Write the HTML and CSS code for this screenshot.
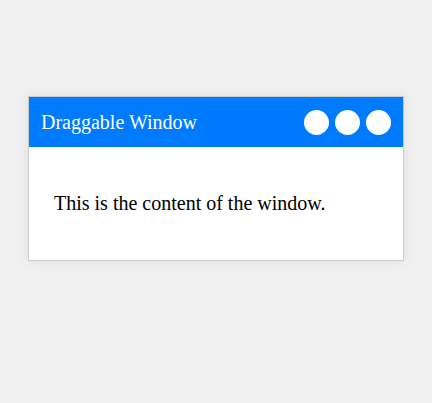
FILE: index.html
```html
<!DOCTYPE html>
<html>
<head>
<meta charset="utf-8">
<link rel="stylesheet" href="styles.css">
</head>
<body>
<div class="window">
  <div class="window-header">
    <span class="window-title">Draggable Window</span>
    <div class="window-controls">
      <span class="control"></span>
      <span class="control"></span>
      <span class="control"></span>
    </div>
  </div>
  <div class="window-content">
    <p>This is the content of the window.</p>
  </div>
</div>
</body>
</html>
```
FILE: styles.css
```css
html, body {
  margin: 0;
  padding: 0;
  background: #f0f0f0;
  width: 432px;
  height: 403px;
  overflow: hidden;
  font-family: "Liberation Serif", "Times New Roman", serif;
}
.window {
  position: absolute;
  left: 28px;
  top: 96px;
  width: 374px;
  background: #fff;
  border: 1px solid #cccccc;
  box-shadow: 0 0 10px rgba(0, 0, 0, 0.08);
}
.window-header {
  background: #007bff;
  color: #fff;
  height: 50px;
  box-sizing: border-box;
  padding: 0 12px;
  display: flex;
  align-items: center;
  justify-content: space-between;
}
.window-title {
  font-size: 20px;
}
.window-controls {
  display: flex;
  gap: 6px;
}
.control {
  width: 25px;
  height: 25px;
  border-radius: 50%;
  background: #fff;
}
.window-content {
  padding: 25px;
}
.window-content p {
  margin: 20px 0;
  font-size: 20px;
  color: #000;
}
```
